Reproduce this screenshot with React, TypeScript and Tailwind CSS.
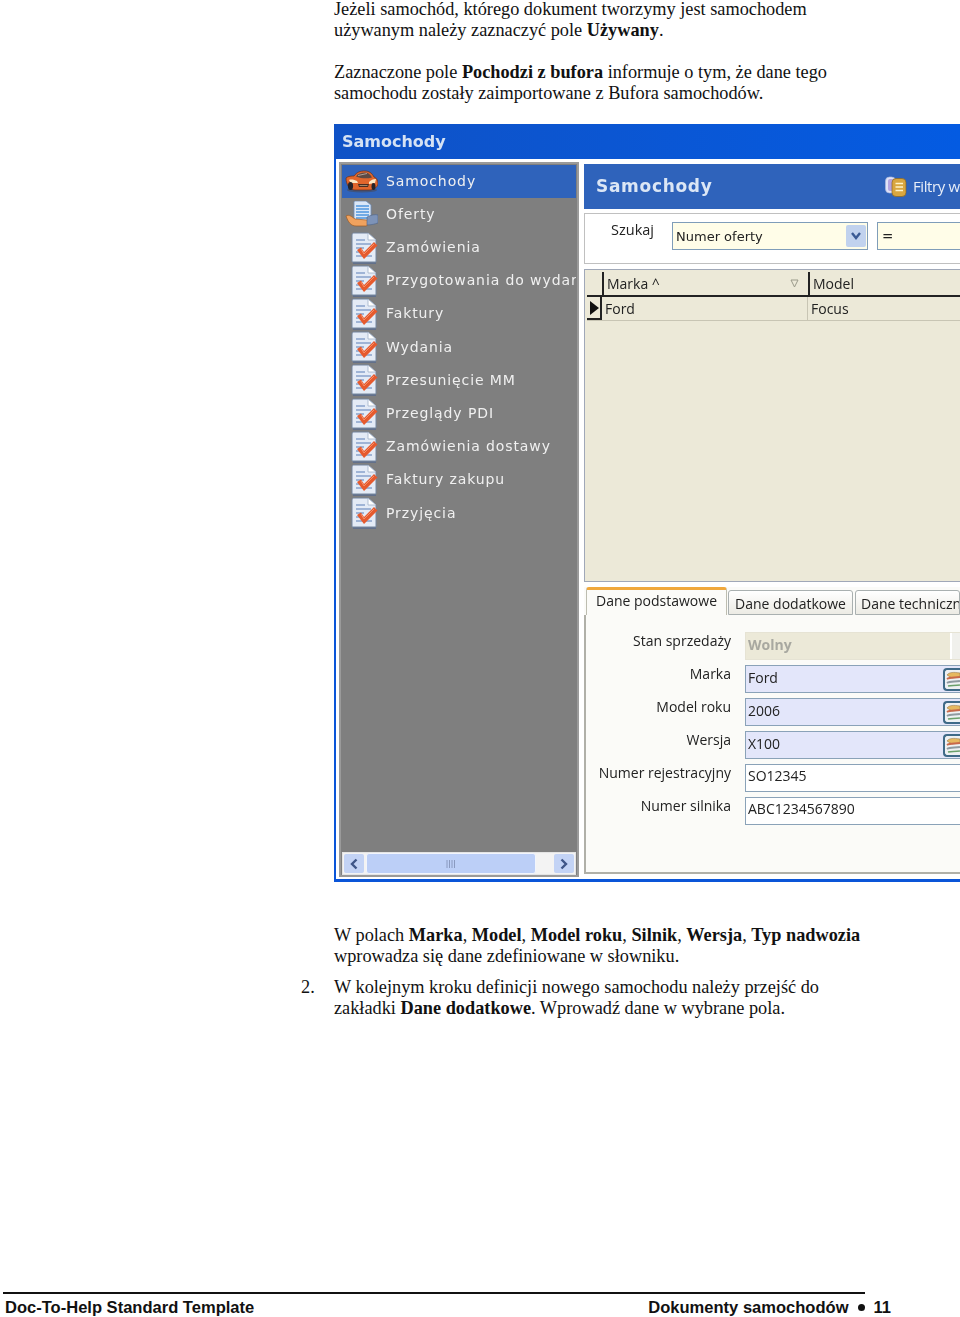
import React from "react";

function DocCheck() {
  return (
    <svg width="28" height="32" viewBox="0 0 28 32" className="shrink-0">
      <path d="M3 29 H26 V32 H3 Z" fill="#5d6d8c" opacity="0.85" />
      <path d="M2 30 V3 C2 1.5 3 1 4 1 H18 L26 8 V30 Z" fill="#e4ebf6" stroke="#75869f" strokeWidth="1" />
      <path d="M18 1 V8 H26 Z" fill="#ffffff" stroke="#9fb0c8" strokeWidth="0.8" />
      <path d="M6 8 H15 M6 12 H21 M6 16 H14 M6 20 H11 M6 24 H22" stroke="#88a3cc" strokeWidth="1.5" />
      <path d="M7 18 L11 15.5 L14 20 L24 10 L27.5 13.5 L14 27 Z" fill="#e65a2e" />
      <path d="M11 17 L14 22 L24 12" fill="none" stroke="#f4906a" strokeWidth="1" />
    </svg>
  );
}

function CarIcon() {
  return (
    <svg width="33" height="23" viewBox="0 0 33 23" className="shrink-0">
      <ellipse cx="17" cy="20" rx="15" ry="2.6" fill="#4a4a55" opacity="0.6" />
      <path d="M1 8 C3 6 7 6 9 6 C12 2 15 1 20 1 C24 1 27 3 29 7 C32 8 33 11 33 14 C32 18 28 20 24 20 H10 C5 20 1 15 1 8 Z" fill="#e0662c" stroke="#6b2c12" strokeWidth="0.7" />
      <path d="M11 6.5 C13 3.5 16 2.5 20 2.5 C23 2.5 25 4 27 7.5 C22 9 16 8.5 11 6.5 Z" fill="#5d4a44" />
      <path d="M13 5.5 L22 3.5" stroke="#c7b4a8" strokeWidth="0.8" />
      <path d="M4 10 C6 9 10 10 12 11 L13 13 L6 13 Z" fill="#fbe9c5" />
      <path d="M24 12 C26 10 28 9 31 9 L30 13 L24 14 Z" fill="#fbe9c5" />
      <path d="M13 14 H24 L23 17 H14 Z" fill="#4a2c1f" />
      <path d="M14.5 15.5 H22.5" stroke="#d9c9a5" strokeWidth="0.6" />
      <ellipse cx="5.5" cy="16" rx="2.6" ry="4" fill="#24242a" />
      <ellipse cx="28.5" cy="16.5" rx="2" ry="3.4" fill="#24242a" />
    </svg>
  );
}

function OfferIcon() {
  return (
    <svg width="33" height="26" viewBox="0 0 33 26" className="shrink-0">
      <path d="M9 1 C9 0.5 10 0 11 0 H21 L26 4 V20 H9 Z" fill="#dbe7f7" stroke="#6f8eb8" strokeWidth="0.8" />
      <path d="M11 5 H24 M11 8 H24 M11 11 H24 M11 14 H24 M11 17 H24" stroke="#4f97df" strokeWidth="1.4" />
      <path d="M1 15 C4 13 7 16 10 18 L22 19 C25 20 24 24 21 25 H11 C6 25 3 21 1 15 Z" fill="#f0a25e" stroke="#9c5a24" strokeWidth="0.7" />
      <path d="M22 16 C26 14 30 13 33 14 V22 C30 23 26 24 22 24 Z" fill="#7d93b8" stroke="#4e6387" strokeWidth="0.6" />
    </svg>
  );
}

function StackIcon() {
  return (
    <svg width="22" height="22" viewBox="0 0 22 22" className="shrink-0">
      <rect x="0.5" y="1" width="10" height="16" rx="4" fill="#dfe3f7" stroke="#a9b5dc" strokeWidth="0.7" />
      <rect x="3" y="3" width="6" height="12" rx="2" fill="#b4a4e0" />
      <rect x="7" y="2.5" width="14" height="18" rx="4" fill="#d9a63f" stroke="#8a661f" strokeWidth="0.7" />
      <path d="M10.5 7.5 H18 M10.5 11 H18 M10.5 14.5 H18" stroke="#fff3c8" strokeWidth="1.5" />
    </svg>
  );
}

function LookupButton() {
  return (
    <div className="w-[17px] h-[23px] shrink-0 rounded-l-[4px] border-[2px] border-r-0 border-[#3f6a88] bg-[#eef1f3] flex items-center pl-[1px] overflow-hidden">
      <svg width="14" height="17" viewBox="0 0 14 17" className="shrink-0">
        <path d="M1 4 C3 1 8 1 14 2 V6 L6 7 Z" fill="#e6b860" stroke="#9c7a48" strokeWidth="0.6" />
        <path d="M1 8 C4 6 9 7 14 6" fill="none" stroke="#c9694a" strokeWidth="2" />
        <path d="M1 12 C4 10 9 11 14 10" fill="none" stroke="#8f9aa0" strokeWidth="2" />
        <path d="M2 15 C5 14 9 15 14 14" fill="none" stroke="#6aa06a" strokeWidth="1.5" />
      </svg>
    </div>
  );
}

const nav = [
  "Samochody",
  "Oferty",
  "Zamówienia",
  "Przygotowania do wydar",
  "Faktury",
  "Wydania",
  "Przesunięcie MM",
  "Przeglądy PDI",
  "Zamówienia dostawy",
  "Faktury zakupu",
  "Przyjęcia",
];

const fields = [
  { label: "Stan sprzedaży", value: "Wolny", kind: "disabled" },
  { label: "Marka", value: "Ford", kind: "lookup" },
  { label: "Model roku", value: "2006", kind: "lookup" },
  { label: "Wersja", value: "X100", kind: "lookup" },
  { label: "Numer rejestracyjny", value: "SO12345", kind: "plain" },
  { label: "Numer silnika", value: "ABC1234567890", kind: "plain" },
];

const uiFont = "font-['DejaVu_Sans','Liberation_Sans',sans-serif]";
const formFont = "font-['Open_Sans','Liberation_Sans',sans-serif]";

function ScreenshotWindow() {
  return (
    <div className={`w-[626px] h-[758px] shrink-0 flex flex-col bg-[#0a55d8] pl-[2px] pb-[3px] blur-[0.5px] ${uiFont}`}>
      <div className="h-[35px] shrink-0 -ml-[2px] pl-[8px] flex items-center bg-gradient-to-r from-[#0f52c6] to-[#045be2]">
        <span className="text-[16px] font-bold tracking-[0px] text-[#d5e2f4]">Samochody</span>
      </div>
      <div className="flex-1 min-h-0 flex bg-white pl-[3px] pt-[3px] pb-[2px]">
        <div className="w-[240px] shrink-0 flex flex-col bg-[#7f7f7f] border-[2px] border-[#9a9a9a] pt-[1px] px-[1px] pb-[1px]">
          <div className="flex-1 flex flex-col overflow-hidden">
            {nav.map((item, i) => (
              <div
                key={item}
                className={`h-[33.2px] shrink-0 flex items-center whitespace-nowrap overflow-hidden ${i === 0 ? "bg-[#2f63bb] -mt-[0.4px]" : ""}`}
              >
                <div className={`w-[44px] shrink-0 flex items-center ${i < 2 ? "pl-[3px]" : "pl-[8px]"}`}>
                  {i === 0 ? <CarIcon /> : i === 1 ? <OfferIcon /> : <DocCheck />}
                </div>
                <span className="text-[14px] tracking-[0.9px] text-[#f0f0f0]">{item}</span>
              </div>
            ))}
          </div>
          <div className="h-[23px] shrink-0 flex items-center gap-[2px] bg-[#f3f3f3] border border-[#e4e4e4] px-[1px] mb-[-1px]">
            <div className="w-[20px] h-[19px] shrink-0 rounded-[2px] bg-[#c3d3f5] flex items-center justify-center text-[#3f5688]">
              <svg width="10" height="12" viewBox="0 0 10 12"><path d="M7.5 1.5 L3 6 L7.5 10.5" fill="none" stroke="currentColor" strokeWidth="2.4" /></svg>
            </div>
            <div className="w-[170px] h-[21px] shrink-0 rounded-[3px] border-[1.5px] border-[#f2f5fc] bg-[#bccff7] flex items-center justify-center">
              <svg width="10" height="8" viewBox="0 0 10 8"><path d="M1 0 V8 M3.5 0 V8 M6 0 V8 M8.5 0 V8" stroke="#8a9ac0" strokeWidth="1" /></svg>
            </div>
            <div className="flex-1" />
            <div className="w-[20px] h-[19px] shrink-0 rounded-[2px] bg-[#c3d3f5] flex items-center justify-center text-[#3f5688]">
              <svg width="10" height="12" viewBox="0 0 10 12"><path d="M2.5 1.5 L7 6 L2.5 10.5" fill="none" stroke="currentColor" strokeWidth="2.4" /></svg>
            </div>
          </div>
        </div>

        <div className="flex-1 min-w-0 flex flex-col pl-[5px] pb-[3px] overflow-hidden">
          <div className="h-[45px] shrink-0 mt-[2px] flex items-center justify-between bg-[#2f63bb] pl-[12px]">
            <span className="text-[17px] font-bold tracking-[0.7px] text-[#dbe6f5]">Samochody</span>
            <div className="flex items-center gap-[6px] w-[75px] shrink-0 overflow-hidden whitespace-nowrap">
              <StackIcon />
              <span className={`text-[15px] tracking-[-0.4px] text-[#e8eef8] ${formFont}`}>Filtry wg</span>
            </div>
          </div>
          <div className="h-[51px] shrink-0 mt-[4px] flex items-start pt-[8px] border border-[#c0c0c0] border-r-0 bg-white">
            <span className={`w-[70px] shrink-0 pl-[26px] -mt-[1px] text-[14.5px] leading-[18px] text-[#222] ${formFont}`}>Szukaj</span>
            <div className="ml-[17px] w-[196px] h-[28px] shrink-0 flex items-center justify-between bg-[#fffde8] border border-[#7f9db9] pl-[3px] pr-[1px]">
              <span className="text-[13px] text-[#222]">Numer oferty</span>
              <div className="w-[20px] h-[22px] rounded-[2px] bg-[#c1d2ee] flex items-center justify-center text-[#3a5a94]">
                <svg width="12" height="10" viewBox="0 0 12 10"><path d="M2 2 L6 7 L10 2" fill="none" stroke="currentColor" strokeWidth="2.4" /></svg>
              </div>
            </div>
            <div className="ml-[9px] flex-1 h-[28px] flex items-center bg-[#fffde8] border border-[#7f9db9] border-r-0 pl-[4px] text-[13.5px] text-[#222]">=</div>
          </div>
          <div className="h-[313px] shrink-0 mt-[5px] flex flex-col bg-[#ece9d8] border border-[#a0a8b8] border-r-0 pt-[2px]">
            <div className={`h-[25px] shrink-0 flex text-[14px] text-[#222] border-b-[2px] border-[#222] ml-[2px] ${formFont}`}>
              <div className="w-[15px] shrink-0" />
              <div className="w-[206px] shrink-0 flex items-center justify-between border-l-[2px] border-[#222] pl-[3px] pr-[9px]">
                <span>Marka ^</span>
                <svg width="9" height="9" viewBox="0 0 9 9"><path d="M1 1 H8 L4.5 8 Z" fill="none" stroke="#9a9a8a" strokeWidth="1" /></svg>
              </div>
              <div className="flex-1 flex items-center border-l-[2px] border-[#222] pl-[3px]">Model</div>
            </div>
            <div className={`h-[24px] shrink-0 flex items-center text-[14px] text-[#222] border-b border-[#c8c5b4] ml-[2px] ${formFont}`}>
              <div className="w-[15px] shrink-0 h-full flex items-center justify-end pr-[1px] border-r-[2px] border-b-[2px] border-[#222]">
                <svg width="9" height="14" viewBox="0 0 9 14"><path d="M0 0 L9 7 L0 14 Z" fill="#111" /></svg>
              </div>
              <div className="w-[206px] shrink-0 pl-[3px] border-r border-[#c8c5b4] h-full flex items-center">Ford</div>
              <div className="pl-[3px]">Focus</div>
            </div>
          </div>
          <div className="flex-1 min-h-0 flex flex-col mt-[5px] bg-[#fbfbf8]">
            <div className={`h-[28px] shrink-0 flex items-end pl-[2px] gap-[2px] text-[14px] text-[#222] whitespace-nowrap ${formFont}`}>
              <div className="w-[141px] h-[28px] shrink-0 flex items-start justify-center rounded-t-[3px] border-t-[3px] border-[#f0a83c] border-x border-x-[#bdbdb0] bg-[#fbfbf8] -mr-[1px]">Dane podstawowe</div>
              <div className="w-[125px] h-[25px] shrink-0 flex items-center justify-center pt-[2px] rounded-t-[3px] border border-[#a9b0b0] bg-gradient-to-b from-white to-[#ecebe4]">Dane dodatkowe</div>
              <div className="flex-1 h-[25px] flex items-center pl-[5px] pt-[2px] rounded-t-[3px] border border-[#a9b0b0] bg-gradient-to-b from-white to-[#ecebe4] overflow-hidden">Dane techniczne</div>
            </div>
            <div className={`flex-1 flex flex-col gap-[5px] pt-[17px] border-l-[2px] border-b-[2px] border-[#b0b0a8] ${formFont}`}>
              {fields.map((f) => (
                <div key={f.label} className="h-[28px] shrink-0 flex items-start">
                  <span className="w-[146px] shrink-0 pr-[1px] -mt-[1px] text-right text-[14px] leading-[20px] whitespace-nowrap text-[#222]">{f.label}</span>
                  <div
                    className={`ml-[13px] flex-1 h-[28px] flex items-center justify-between pl-[2px] text-[14px] border border-r-0 overflow-hidden whitespace-nowrap ${
                      f.kind === "disabled"
                        ? "bg-[#ece9d8] border-[#e6e3d4] font-bold text-[#a8a8a0]"
                        : f.kind === "lookup"
                          ? "bg-[#e3e6fa] border-[#8aa2b8] text-[#222]"
                          : "bg-white border-[#8aa2b8] text-[#222]"
                    }`}
                  >
                    <span className={f.kind === "plain" ? "-mt-[5px]" : "-mt-[4px]"}>{f.value}</span>
                    {f.kind === "lookup" && <LookupButton />}
                    {f.kind === "disabled" && <div className="w-[10px] h-full shrink-0 bg-[#f0f0ec] border-l-[2px] border-white" />}
                  </div>
                </div>
              ))}
            </div>
          </div>
        </div>
      </div>
    </div>
  );
}

export default function App() {
  return (
    <div className="w-[960px] h-[1317px] flex flex-col overflow-hidden bg-white text-[#111] font-['Liberation_Serif','Times_New_Roman',serif] text-[18.3px] leading-[21px]">
      <div className="pl-[334px] -mt-[1px] flex flex-col">
        <p className="mb-[21px] whitespace-nowrap">
          Jeżeli samochód, którego dokument tworzymy jest samochodem
          <br />
          używanym należy zaznaczyć pole <b>Używany</b>.
        </p>
        <p className="mb-[20px] whitespace-nowrap">
          Zaznaczone pole <b>Pochodzi z bufora</b> informuje o tym, że dane tego
          <br />
          samochodu zostały zaimportowane z Bufora samochodów.
        </p>
        <ScreenshotWindow />
        <p className="mt-[43px] whitespace-nowrap">
          W polach <b>Marka</b>, <b>Model</b>, <b>Model roku</b>, <b>Silnik</b>, <b>Wersja</b>, <b>Typ nadwozia</b>
          <br />
          wprowadza się dane zdefiniowane w słowniku.
        </p>
      </div>
      <div className="mt-[10px] pl-[301px] flex whitespace-nowrap">
        <span className="w-[33px] shrink-0">2.</span>
        <p>
          W kolejnym kroku definicji nowego samochodu należy przejść do
          <br />
          zakładki <b>Dane dodatkowe</b>. Wprowadź dane w wybrane pola.
        </p>
      </div>
      <div className="mt-auto ml-[3px] w-[862px] border-t-[2px] border-[#111] pt-[4px] flex justify-between font-['Liberation_Sans',Arial,sans-serif] font-bold text-[16.55px] leading-[19px] whitespace-nowrap">
        <span className="pl-[2px]">Doc-To-Help Standard Template</span>
        <span className="-mr-[26px] flex items-center">
          Dokumenty samochodów
          <span className="inline-block w-[7px] h-[7px] rounded-full bg-[#111] mx-[9px]" />
          11
        </span>
      </div>
    </div>
  );
}
